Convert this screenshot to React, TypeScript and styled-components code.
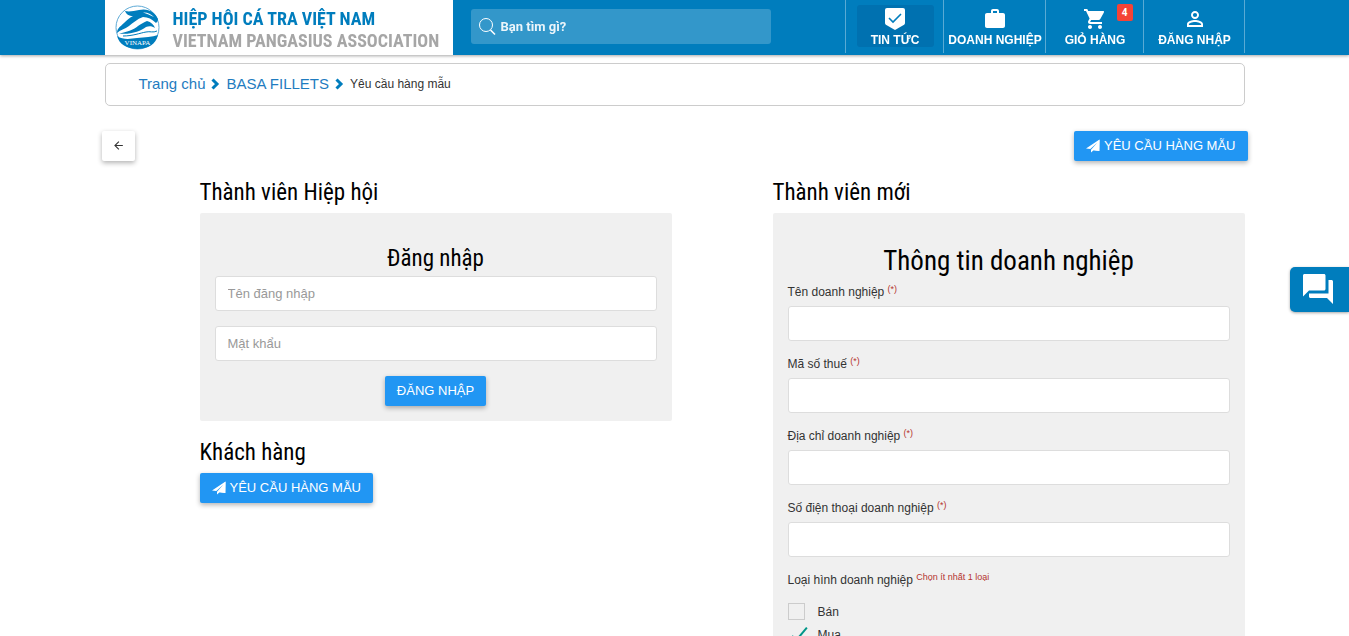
import React from "react";
import styled, { createGlobalStyle, css } from "styled-components";
import { MdWork, MdShoppingCart, MdPersonOutline, MdQuestionAnswer, MdArrowBack } from "react-icons/md";

const blue = "#007dbd";
const action = "#2196f3";
const condensed = `"Roboto Condensed", "Liberation Sans Narrow", "Roboto", sans-serif`;
const body = `"Liberation Sans", sans-serif`;

const GlobalStyle = createGlobalStyle`
  *, *::before, *::after { box-sizing: border-box; }
  body {
    margin: 0;
    background: #fff;
    color: #333;
    font: 12px/18px ${body};
  }
  button, input { font-family: inherit; }
  a { color: inherit; text-decoration: none; }
`;

const Page = styled.div`
  height: 100vh;
  overflow-x: hidden;
  overflow-y: auto;
  scrollbar-width: none;
`;

const Container = styled.div`
  max-width: 1140px;
  margin: 0 auto;
`;

const Header = styled.header`
  position: sticky;
  top: 0;
  z-index: 2;
  background: ${blue};
  box-shadow: 0 1px 3px rgba(0, 0, 0, 0.35);
`;

const HeaderRow = styled(Container)`
  display: flex;
  height: 55px;
`;

const Brand = styled.a`
  display: flex;
  align-items: center;
  gap: 13px;
  width: 348px;
  padding-left: 10px;
  background: #fff;
  font-family: ${condensed};
  font-weight: 700;
  font-size: 18px;
  line-height: 22px;
  white-space: nowrap;
  color: #a6a6a6;
`;

const BrandName = styled.span`
  display: block;
  padding-top: 4px;
  color: ${blue};
`;

const SearchForm = styled.form`
  display: flex;
  align-items: center;
  gap: 5px;
  width: 300px;
  height: 35px;
  margin: 9px 0 0 18px;
  padding: 0 7px;
  border-radius: 3px;
  background: rgba(255, 255, 255, 0.2);
  color: #fff;
`;

const SearchInput = styled.input`
  flex: 1;
  min-width: 0;
  border: 0;
  padding: 0;
  outline: 0;
  background: none;
  color: #fff;
  font: 700 13px/18px "Roboto", sans-serif;
  &::placeholder { color: #fff; opacity: 0.9; }
`;

const Nav = styled.nav`
  display: flex;
  height: 53px;
  margin-left: auto;
  border-left: 1px solid rgba(255, 255, 255, 0.35);
`;

const NavCell = styled.div<{ $width: number }>`
  width: ${(p) => p.$width}px;
  padding-top: 5px;
  border-right: 1px solid rgba(255, 255, 255, 0.35);
`;

const NavLink = styled.a<{ $active?: boolean }>`
  position: relative;
  display: flex;
  flex-direction: column;
  align-items: center;
  height: 42px;
  margin: 0 ${(p) => (p.$active ? 9 : 0)}px 0 ${(p) => (p.$active ? 11 : 2)}px;
  padding-top: 2px;
  border-radius: 3px;
  background: ${(p) => (p.$active ? "#0071b0" : "none")};
  color: #fff;
  font-size: 12px;
  line-height: 18px;
  font-weight: 700;
  white-space: nowrap;
  svg { flex: none; }
`;

const Badge = styled.span`
  position: absolute;
  top: -1px;
  right: 10px;
  width: 16px;
  border-radius: 2px;
  background: #f44336;
  font: 700 10px/17px "Roboto", sans-serif;
  text-align: center;
`;

const Breadcrumb = styled.nav`
  display: flex;
  align-items: center;
  gap: 6px;
  height: 43px;
  margin-top: 8px;
  padding: 0 33px 2px;
  border: 1px solid #ccc;
  border-radius: 5px;
  svg { color: ${blue}; }
`;

const Crumb = styled.a`
  color: #1f7cc0;
  font-size: 15px;
`;

const Toolbar = styled.div`
  display: flex;
  justify-content: space-between;
  margin: 25px -3px 0;
`;

const raised = css`
  border: 0;
  border-radius: 2px;
  box-shadow: 0 2px 5px rgba(0, 0, 0, 0.3);
  cursor: pointer;
`;

const BackButton = styled.button`
  ${raised}
  display: grid;
  place-items: center;
  width: 33px;
  height: 30px;
  padding: 0 0 2px;
  background: #fff;
  color: #333;
`;

const ActionButton = styled.button`
  ${raised}
  display: inline-flex;
  align-items: center;
  gap: 4px;
  height: 30px;
  padding: 0 12px 1px;
  background: ${action};
  color: #fff;
  font-size: 13px;
  line-height: 19px;
  white-space: nowrap;
`;

const Columns = styled.main`
  display: grid;
  grid-template-columns: 1fr 1fr;
  gap: 101px;
  align-items: start;
  margin-top: 15px;
  padding-left: 95px;
`;

const Title = styled.h2`
  margin: 0 0 3px;
  color: #000;
  font: 400 23px/34px ${condensed};
`;

const Panel = styled.form`
  margin-bottom: 15px;
  padding: 29px 15px 15px;
  border-radius: 2px;
  background: #f0f0f0;
`;

const PanelTitle = styled.h3<{ $large?: boolean }>`
  margin: 0 0 ${(p) => (p.$large ? 4 : 0)}px;
  color: #000;
  text-align: center;
  font: 400 ${(p) => (p.$large ? "27px/38px" : "23px/34px")} ${condensed};
`;

const Field = styled.input`
  display: block;
  width: 100%;
  height: 35px;
  margin-bottom: 15px;
  padding: 0 12px;
  border: 1px solid #ddd;
  border-radius: 3px;
  background: #fff;
  font-size: 13px;
  &::placeholder { color: #999; opacity: 1; }
`;

const Label = styled.label`
  display: block;
  height: 22px;
  line-height: 16px;
`;

const GroupLabel = styled.legend`
  height: 28px;
  padding: 0;
  line-height: 16px;
`;

const Note = styled.sup`
  color: #b5342f;
  font-size: 9px;
  line-height: 0;
  vertical-align: 4px;
`;

const Group = styled.fieldset`
  margin: 0;
  padding: 0;
  border: 0;
`;

const Option = styled.label`
  display: flex;
  align-items: center;
  gap: 13px;
  height: 23px;
`;

const Tick = styled.input`
  position: relative;
  appearance: none;
  width: 17px;
  height: 17px;
  margin: 0;
  border: 1px solid #ccc;
  &:checked { border-color: transparent; }
  &:checked::after {
    content: "";
    position: absolute;
    left: 7px;
    top: -3px;
    width: 7px;
    height: 17px;
    border: solid #009688;
    border-width: 0 2px 2px 0;
    transform: rotate(40deg);
  }
`;

const Centered = styled.div`
  display: flex;
  justify-content: center;
`;

const ChatButton = styled.button`
  position: fixed;
  right: 0;
  top: 267px;
  z-index: 3;
  display: grid;
  place-items: center;
  width: 59px;
  height: 45px;
  padding: 0 4px 2px 0;
  border: 0;
  border-radius: 5px 0 0 5px;
  background: ${blue};
  color: #fff;
  box-shadow: 0 1px 3px rgba(0, 0, 0, 0.35);
`;

const Logo = () => (
  <svg width="45" height="45" viewBox="0 0 45 45" aria-hidden="true">
    <circle cx="22.5" cy="22.5" r="21.5" fill="#fff" stroke="#5eaad6" strokeWidth="1" />
    <path d="M2 31 C8 35 15 34 22 33 C30 32 37 32 43 30 C41 39 33 44 22.500 44 C12 44 4 39 2 31Z" fill={blue} />
    <path d="M10 6 C14 7 19 6 24 5 C33 3 40 7 43 14 C43 16 42 17 41 18 C37 14 33 12 28 12 C22 14 18 18 14 21 C10 24 5 25 2 28 C2 23 6 21 9 18 C12 15 14 13 18 11 C14 11 11 9 10 6Z" fill={blue} />
    <path d="M4 28.500 C12 27 18 25 23 21 C26 19 29 17 32 16 C36 17 39 20 40 23 C37 21 34 21 31 22 C26 26 15 30 4 28.500Z" fill={blue} />
    <path d="M28 7.500 C32 7 36 9 39 12 C35 10 32 9 28 7.500Z" fill="#fff" />
    <path d="M8 31 C18 31 25 28 31 27 C35 26 38 28 42 26" fill="none" stroke={blue} strokeWidth="1" />
    <text x="22.5" y="40" fill="#fff" fontFamily="Liberation Serif, serif" fontSize="7" textAnchor="middle" fontWeight="400">VINAPA</text>
  </svg>
);

const SearchIcon = () => (
  <svg width="18" height="18" viewBox="0 0 18 18" fill="none" stroke="currentColor" strokeWidth="1" aria-hidden="true">
    <circle cx="8" cy="7" r="6.500" />
    <path d="M12.500 12l4.500 4.500" strokeWidth="1.600" />
  </svg>
);

const NewsIcon = () => (
  <svg width="24" height="24" viewBox="0 0 24 24" aria-hidden="true">
    <path d="M4 1h16a2 2 0 0 1 2 2v13c0 .8-.4 1.400-.9 1.800L12 23l-9.100-5.200C2.400 17.400 2 16.800 2 16V3a2 2 0 0 1 2-2Z" fill="currentColor" />
    <path d="M6 11l4 4 8-8" fill="none" stroke={blue} strokeWidth="1.600" />
  </svg>
);

const Chevron = () => (
  <svg width="9" height="12" viewBox="0 0 9 12" aria-hidden="true">
    <path d="M1.500 1.500L6 6l-4.500 4.500" fill="none" stroke="currentColor" strokeWidth="3" />
  </svg>
);

const PlaneIcon = () => (
  <svg width="14" height="14" viewBox="0 0 14 14" aria-hidden="true">
    <path d="M13.500 0.500L0 9.500l4.300 .6L11.500 3.500 5 10.800V13.500l2.600-2.200L13.300 12Z" fill="currentColor" />
    <path d="M13.500 0.500L6.500 11L13.300 12Z" fill="currentColor" />
  </svg>
);

const required = [
  { id: "name", label: "Tên doanh nghiệp" },
  { id: "tax", label: "Mã số thuế" },
  { id: "address", label: "Địa chỉ doanh nghiệp" },
  { id: "phone", label: "Số điện thoại doanh nghiệp" },
];

const SampleButton = () => (
  <ActionButton type="button">
    <PlaneIcon />
    YÊU CẦU HÀNG MẪU
  </ActionButton>
);

export default function App() {
  return (
    <Page>
      <GlobalStyle />
      <Header>
        <HeaderRow>
          <Brand href="#">
            <Logo />
            <span>
              <BrandName>HIỆP HỘI CÁ TRA VIỆT NAM</BrandName>
              VIETNAM PANGASIUS ASSOCIATION
            </span>
          </Brand>
          <SearchForm role="search">
            <SearchIcon />
            <SearchInput aria-label="Bạn tìm gì?" placeholder="Bạn tìm gì?" />
          </SearchForm>
          <Nav>
            <NavCell $width={98}>
              <NavLink href="#" $active><NewsIcon />TIN TỨC</NavLink>
            </NavCell>
            <NavCell $width={102}>
              <NavLink href="#"><MdWork size={24} />DOANH NGHIỆP</NavLink>
            </NavCell>
            <NavCell $width={98}>
              <NavLink href="#"><MdShoppingCart size={24} />GIỎ HÀNG<Badge>4</Badge></NavLink>
            </NavCell>
            <NavCell $width={101}>
              <NavLink href="#"><MdPersonOutline size={24} />ĐĂNG NHẬP</NavLink>
            </NavCell>
          </Nav>
        </HeaderRow>
      </Header>
      <Container>
        <Breadcrumb>
          <Crumb href="#">Trang chủ</Crumb>
          <Chevron />
          <Crumb href="#">BASA FILLETS</Crumb>
          <Chevron />
          <span>Yêu cầu hàng mẫu</span>
        </Breadcrumb>
        <Toolbar>
          <BackButton type="button" aria-label="Quay lại"><MdArrowBack size={13} /></BackButton>
          <SampleButton />
        </Toolbar>
        <Columns>
          <section>
            <Title>Thành viên Hiệp hội</Title>
            <Panel>
              <PanelTitle>Đăng nhập</PanelTitle>
              <Field aria-label="Tên đăng nhập" placeholder="Tên đăng nhập" />
              <Field type="password" aria-label="Mật khẩu" placeholder="Mật khẩu" />
              <Centered><ActionButton type="button">ĐĂNG NHẬP</ActionButton></Centered>
            </Panel>
            <Title>Khách hàng</Title>
            <SampleButton />
          </section>
          <section>
            <Title>Thành viên mới</Title>
            <Panel>
              <PanelTitle $large>Thông tin doanh nghiệp</PanelTitle>
              {required.map((f) => (
                <React.Fragment key={f.id}>
                  <Label htmlFor={f.id}>{f.label} <Note>(*)</Note></Label>
                  <Field id={f.id} required />
                </React.Fragment>
              ))}
              <Group>
                <GroupLabel>Loại hình doanh nghiệp <Note>Chọn ít nhất 1 loại</Note></GroupLabel>
                <Option><Tick type="checkbox" />Bán</Option>
                <Option><Tick type="checkbox" defaultChecked />Mua</Option>
              </Group>
            </Panel>
          </section>
        </Columns>
      </Container>
      <ChatButton type="button" aria-label="Chat"><MdQuestionAnswer size={36} /></ChatButton>
    </Page>
  );
}
